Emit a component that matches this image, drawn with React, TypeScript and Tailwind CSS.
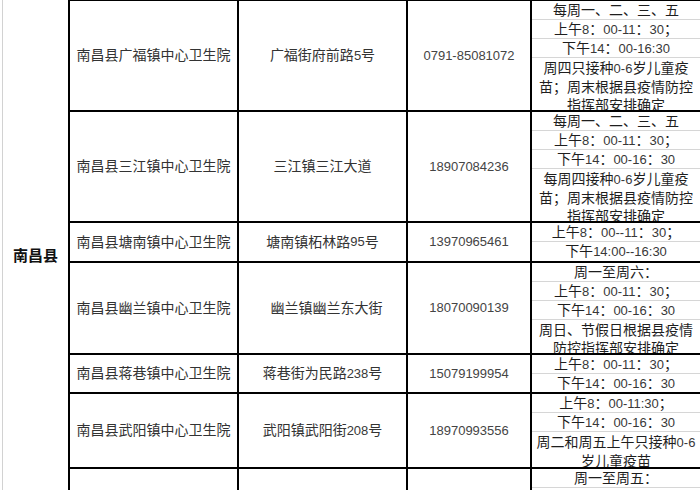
import React from "react";

type Row = {
  name: string;
  addr: string;
  phone: string;
  h: string;
  segs: string[][];
};

const rows: Row[] = [
  {
    name: "南昌县广福镇中心卫生院",
    addr: "广福街府前路5号",
    phone: "0791-85081072",
    h: "h-[111px]",
    segs: [
      ["每周一、二、三、五"],
      ["上午8：00-11：30；"],
      ["下午14：00-16:30"],
      ["周四只接种0-6岁儿童疫", "苗；周末根据县疫情防控", "指挥部安排确定"],
    ],
  },
  {
    name: "南昌县三江镇中心卫生院",
    addr: "三江镇三江大道",
    phone: "18907084236",
    h: "h-[111px]",
    segs: [
      ["每周一、二、三、五"],
      ["上午8：00-11：30；"],
      ["下午14：00-16：30"],
      ["每周四接种0-6岁儿童疫", "苗；周末根据县疫情防控", "指挥部安排确定"],
    ],
  },
  {
    name: "南昌县塘南镇中心卫生院",
    addr: "塘南镇柘林路95号",
    phone: "13970965461",
    h: "h-[40px]",
    segs: [["上午8：00--11：30；"], ["下午14:00--16:30"]],
  },
  {
    name: "南昌县幽兰镇中心卫生院",
    addr: "\u00a0\u00a0幽兰镇幽兰东大街",
    phone: "18070090139",
    h: "h-[92px]",
    segs: [
      ["周一至周六："],
      ["上午8：00-11：30；"],
      ["下午14：00-16：30"],
      ["周日、节假日根据县疫情", "防控指挥部安排确定"],
    ],
  },
  {
    name: "南昌县蒋巷镇中心卫生院",
    addr: "蒋巷街为民路238号",
    phone: "15079199954",
    h: "h-[39px]",
    segs: [["上午8：00-11：30；"], ["下午14：00-16：30"]],
  },
  {
    name: "南昌县武阳镇中心卫生院",
    addr: "武阳镇武阳街208号",
    phone: "18970993556",
    h: "h-[75px]",
    segs: [
      ["上午8：00-11:30；"],
      ["下午14：00-16：30"],
      ["周二和周五上午只接种0-6", "岁儿童疫苗"],
    ],
  },
  {
    name: "",
    addr: "",
    phone: "",
    h: "h-[60px]",
    segs: [["周一至周五："], ["上午8：00-11：30；"], ["下午14：00-16：30"]],
  },
];

// latin runs are set a bit smaller and greyer, like the Calibri digits in the sheet
const Mixed: React.FC<{ text: string }> = ({ text }) => {
  const parts = text.split(/([\x20-\x7E]+)/);
  return (
    <>
      {parts.map((p, i) =>
        /^[\x20-\x7E]+$/.test(p) ? (
          <span key={i} className="text-[13px] text-[#383838]">
            {p}
          </span>
        ) : (
          <React.Fragment key={i}>{p}</React.Fragment>
        )
      )}
    </>
  );
};

const Hours: React.FC<{ segs: string[][] }> = ({ segs }) => (
  <div className="flex-1 flex flex-col min-w-0 overflow-hidden">
    {segs.map((lines, i) => {
      const last = i === segs.length - 1;
      return (
        <div
          key={i}
          className={
            last
              ? lines.length > 1
                ? "flex-1 flex flex-col items-center overflow-hidden pt-[1px]"
                : "flex-1 flex flex-col items-center justify-center overflow-hidden"
              : "h-[19px] shrink-0 flex flex-col items-center justify-center border-b border-[#d6d6d6]"
          }
        >
          {lines.map((l, j) => (
            <div key={j} className="leading-[18px] whitespace-nowrap text-[14px] text-[#1e1e1e]">
              <Mixed text={l} />
            </div>
          ))}
        </div>
      );
    })}
  </div>
);

const App: React.FC = () => {
  return (
    <div className="w-[700px] h-[490px] overflow-hidden bg-white flex font-['Liberation_Sans','Noto_Sans_CJK_SC',sans-serif]">
      <div className="w-[66px] ml-[2px] shrink-0 border-l border-[#d2d2d2] flex items-center justify-center pt-[22px]">
        <span className="text-[15px] font-bold text-[#111]">南昌县</span>
      </div>
      <div className="flex-1 flex flex-col border-l-2 border-t border-black">
        {rows.map((r, i) => (
          <div key={i} className={`${r.h} shrink-0 flex border-b-2 border-black`}>
            <div className="w-[169px] shrink-0 border-r-2 border-black flex items-center justify-center text-[14px] text-[#333]">
              {r.name}
            </div>
            <div className="w-[169px] shrink-0 border-r-2 border-black flex items-center justify-center text-[14px] text-[#333] whitespace-pre">
              <Mixed text={r.addr} />
            </div>
            <div className="w-[124px] shrink-0 border-r-2 border-black flex items-center justify-center text-[13px] text-[#444]">
              {r.phone}
            </div>
            <Hours segs={r.segs} />
          </div>
        ))}
      </div>
    </div>
  );
};

export default App;
